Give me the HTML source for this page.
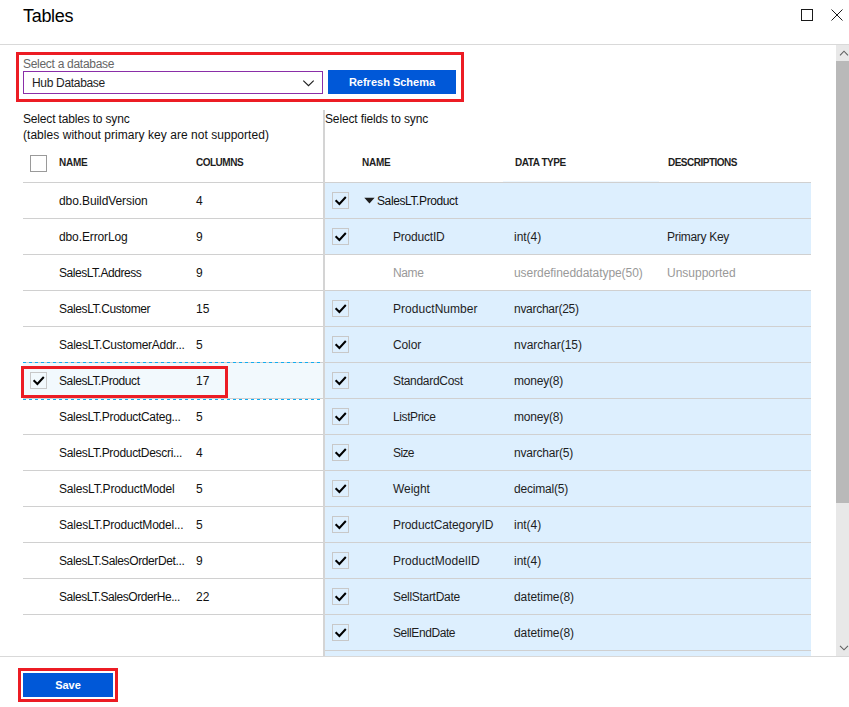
<!DOCTYPE html>
<html><head><meta charset="utf-8"><title>Tables</title>
<style>
html,body{margin:0;padding:0;}
body{width:849px;height:707px;overflow:hidden;background:#fff;font-family:"Liberation Sans",sans-serif;color:#111;position:relative}
.a{position:absolute;display:block}
.t{position:absolute;font-size:12px;line-height:16px;white-space:nowrap}
.h{position:absolute;font-size:10px;font-weight:bold;line-height:12px;white-space:nowrap;color:#1e1e1e}
.sep{position:absolute;height:1px;background:#d0d0d0}
.red{position:absolute;border:3px solid #ec1c24;box-sizing:border-box}
.btn{position:absolute;background:#0058d8;color:#fff;font-weight:bold;font-size:11px;line-height:24px;text-align:center;white-space:nowrap}
</style></head><body>

<div class="a" style="left:23px;top:4px;font-size:18px;line-height:24px;color:#000;white-space:nowrap;letter-spacing:-0.3px">Tables</div>
<svg class="a" style="left:795px;top:3px" width="54" height="24" viewBox="795 3 54 24"><rect x="801.5" y="9.5" width="11" height="11" fill="none" stroke="#1a1a1a" stroke-width="1"/><path d="M831.5 9.5 L842.5 20.5 M842.5 9.5 L831.5 20.5" stroke="#1a1a1a" stroke-width="1" fill="none"/></svg>
<div class="sep" style="left:0;top:44px;width:849px;background:#d9d9d9"></div>
<div class="a" style="left:836px;top:45px;width:13px;height:611px;background:#e8e8e8"></div>
<div class="a" style="left:836px;top:61px;width:13px;height:442px;background:#b9b9b9"></div>
<svg class="a" style="left:836px;top:45px" width="13" height="16" viewBox="836 45 13 16"><path d="M840 55.3 L844 51.2 L848 55.3" fill="none" stroke="#606060" stroke-width="1.1"/></svg>
<svg class="a" style="left:836px;top:640px" width="13" height="16" viewBox="836 640 13 16"><path d="M840 645.8 L844 649.8 L848 645.8" fill="none" stroke="#606060" stroke-width="1.1"/></svg>
<div class="red" style="left:16px;top:52px;width:448px;height:50px"></div>
<div class="t" style="left:23px;top:56px;color:#666;letter-spacing:-0.29px;">Select a database</div>
<div class="a" style="left:23px;top:71px;width:300px;height:23px;border:1px solid #8a2ea8;box-sizing:border-box"></div>
<div class="t" style="left:32px;top:75px;color:#1e1e1e;letter-spacing:-0.32px;">Hub Database</div>
<svg class="a" style="left:300px;top:76px" width="18" height="14" viewBox="300 76 18 14"><path d="M303.3 80.6 L308.5 85.6 L313.7 80.6" fill="none" stroke="#1e1e1e" stroke-width="1.15"/></svg>
<div class="btn" style="left:328px;top:70px;width:128px;height:24px">Refresh Schema</div>
<div class="t" style="left:23px;top:111px;letter-spacing:-0.17px;">Select tables to sync</div>
<div class="t" style="left:23px;top:127px;letter-spacing:0.04px;">(tables without primary key are not supported)</div>
<div class="t" style="left:325px;top:111px;letter-spacing:-0.14px;">Select fields to sync</div>
<div class="a" style="left:323px;top:110px;width:2px;height:546px;background:#d4d4d4"></div>
<div class="a" style="left:503px;top:181px;width:156px;height:1px;background:#eef7fe"></div>
<svg class="a" style="left:30px;top:155px" width="17" height="17" viewBox="0 0 17 17"><rect x="0.5" y="0.5" width="16" height="16" fill="none" stroke="#9a9a9a"/></svg>
<div class="h" style="left:59px;top:157px;letter-spacing:-0.25px;">NAME</div>
<div class="h" style="left:196px;top:157px;letter-spacing:-0.50px;">COLUMNS</div>
<div class="sep" style="left:23px;top:182px;width:300px"></div>
<div class="sep" style="left:23px;top:218px;width:300px"></div>
<div class="sep" style="left:23px;top:254px;width:300px"></div>
<div class="sep" style="left:23px;top:290px;width:300px"></div>
<div class="sep" style="left:23px;top:326px;width:300px"></div>
<div class="sep" style="left:23px;top:362px;width:300px"></div>
<div class="sep" style="left:23px;top:398px;width:300px"></div>
<div class="sep" style="left:23px;top:434px;width:300px"></div>
<div class="sep" style="left:23px;top:470px;width:300px"></div>
<div class="sep" style="left:23px;top:506px;width:300px"></div>
<div class="sep" style="left:23px;top:542px;width:300px"></div>
<div class="sep" style="left:23px;top:578px;width:300px"></div>
<div class="sep" style="left:23px;top:614px;width:300px"></div>
<div class="t" style="left:59px;top:193px;letter-spacing:-0.09px;">dbo.BuildVersion</div>
<div class="t" style="left:196px;top:193px">4</div>
<div class="t" style="left:59px;top:229px;letter-spacing:-0.12px;">dbo.ErrorLog</div>
<div class="t" style="left:196px;top:229px">9</div>
<div class="t" style="left:59px;top:265px;letter-spacing:-0.46px;">SalesLT.Address</div>
<div class="t" style="left:196px;top:265px">9</div>
<div class="t" style="left:59px;top:301px;letter-spacing:-0.37px;">SalesLT.Customer</div>
<div class="t" style="left:196px;top:301px">15</div>
<div class="t" style="left:59px;top:337px;letter-spacing:-0.27px;">SalesLT.CustomerAddr...</div>
<div class="t" style="left:196px;top:337px">5</div>
<div class="a" style="left:23px;top:363px;width:300px;height:35px;background:#f2f9fd"></div>
<svg class="a" style="left:30px;top:372px" width="17" height="17" viewBox="0 0 17 17"><rect x="0.5" y="0.5" width="16" height="16" fill="none" stroke="#c8c8c8"/><path d="M3.6 8.3 L7.4 12 L13.8 5" fill="none" stroke="#000" stroke-width="2"/></svg>
<div class="t" style="left:59px;top:373px;letter-spacing:-0.39px;">SalesLT.Product</div>
<div class="t" style="left:196px;top:373px">17</div>
<div class="t" style="left:59px;top:409px;letter-spacing:-0.30px;">SalesLT.ProductCateg...</div>
<div class="t" style="left:196px;top:409px">5</div>
<div class="t" style="left:59px;top:445px;letter-spacing:-0.31px;">SalesLT.ProductDescri...</div>
<div class="t" style="left:196px;top:445px">4</div>
<div class="t" style="left:59px;top:481px;letter-spacing:-0.19px;">SalesLT.ProductModel</div>
<div class="t" style="left:196px;top:481px">5</div>
<div class="t" style="left:59px;top:517px;letter-spacing:-0.21px;">SalesLT.ProductModel...</div>
<div class="t" style="left:196px;top:517px">5</div>
<div class="t" style="left:59px;top:553px;letter-spacing:-0.38px;">SalesLT.SalesOrderDet...</div>
<div class="t" style="left:196px;top:553px">9</div>
<div class="t" style="left:59px;top:589px;letter-spacing:-0.45px;">SalesLT.SalesOrderHe...</div>
<div class="t" style="left:196px;top:589px">22</div>
<div class="h" style="left:362px;top:157px;letter-spacing:-0.25px;">NAME</div>
<div class="h" style="left:515px;top:157px;letter-spacing:-0.46px;">DATA TYPE</div>
<div class="h" style="left:668px;top:157px;letter-spacing:-0.51px;">DESCRIPTIONS</div>
<div class="a" style="left:325px;top:182px;width:486px;height:474px;overflow:hidden">
<div class="a" style="left:0;top:0px;width:486px;height:36px;background:#ddeffe"></div>
<div class="sep" style="left:0;top:0px;width:486px"></div>
<svg class="a" style="left:7px;top:10px" width="17" height="17" viewBox="0 0 17 17"><rect x="0.5" y="0.5" width="16" height="16" fill="none" stroke="#c8c8c8"/><path d="M3.6 8.3 L7.4 12 L13.8 5" fill="none" stroke="#000" stroke-width="2"/></svg>
<svg class="a" style="left:38px;top:14px" width="12" height="8" viewBox="0 0 12 8"><path d="M1.3 1.8 H11.6 L6.45 7.5 Z" fill="#1e1e1e"/></svg>
<div class="t" style="left:52px;top:11px;letter-spacing:-0.39px;">SalesLT.Product</div>
<div class="a" style="left:0;top:36px;width:486px;height:36px;background:#ddeffe"></div>
<div class="sep" style="left:0;top:36px;width:486px"></div>
<svg class="a" style="left:7px;top:46px" width="17" height="17" viewBox="0 0 17 17"><rect x="0.5" y="0.5" width="16" height="16" fill="none" stroke="#c8c8c8"/><path d="M3.6 8.3 L7.4 12 L13.8 5" fill="none" stroke="#000" stroke-width="2"/></svg>
<div class="t" style="left:68px;top:47px;color:#1e1e1e;letter-spacing:-0.21px;">ProductID</div>
<div class="t" style="left:189px;top:47px;color:#1e1e1e;letter-spacing:-0.02px;">int(4)</div>
<div class="t" style="left:342px;top:47px;color:#1e1e1e;letter-spacing:-0.31px;">Primary Key</div>
<div class="a" style="left:0;top:72px;width:486px;height:36px;background:#fff"></div>
<div class="sep" style="left:0;top:72px;width:486px"></div>
<div class="t" style="left:68px;top:83px;color:#999;letter-spacing:-0.40px;">Name</div>
<div class="t" style="left:189px;top:83px;color:#999;letter-spacing:-0.06px;">userdefineddatatype(50)</div>
<div class="t" style="left:342px;top:83px;color:#999;letter-spacing:0.00px;">Unsupported</div>
<div class="a" style="left:0;top:108px;width:486px;height:36px;background:#ddeffe"></div>
<div class="sep" style="left:0;top:108px;width:486px"></div>
<svg class="a" style="left:7px;top:118px" width="17" height="17" viewBox="0 0 17 17"><rect x="0.5" y="0.5" width="16" height="16" fill="none" stroke="#c8c8c8"/><path d="M3.6 8.3 L7.4 12 L13.8 5" fill="none" stroke="#000" stroke-width="2"/></svg>
<div class="t" style="left:68px;top:119px;color:#1e1e1e;letter-spacing:0.04px;">ProductNumber</div>
<div class="t" style="left:189px;top:119px;color:#1e1e1e;letter-spacing:-0.28px;">nvarchar(25)</div>
<div class="a" style="left:0;top:144px;width:486px;height:36px;background:#ddeffe"></div>
<div class="sep" style="left:0;top:144px;width:486px"></div>
<svg class="a" style="left:7px;top:154px" width="17" height="17" viewBox="0 0 17 17"><rect x="0.5" y="0.5" width="16" height="16" fill="none" stroke="#c8c8c8"/><path d="M3.6 8.3 L7.4 12 L13.8 5" fill="none" stroke="#000" stroke-width="2"/></svg>
<div class="t" style="left:68px;top:155px;color:#1e1e1e;letter-spacing:-0.12px;">Color</div>
<div class="t" style="left:189px;top:155px;color:#1e1e1e;">nvarchar(15)</div>
<div class="a" style="left:0;top:180px;width:486px;height:36px;background:#ddeffe"></div>
<div class="sep" style="left:0;top:180px;width:486px"></div>
<svg class="a" style="left:7px;top:190px" width="17" height="17" viewBox="0 0 17 17"><rect x="0.5" y="0.5" width="16" height="16" fill="none" stroke="#c8c8c8"/><path d="M3.6 8.3 L7.4 12 L13.8 5" fill="none" stroke="#000" stroke-width="2"/></svg>
<div class="t" style="left:68px;top:191px;color:#1e1e1e;letter-spacing:-0.30px;">StandardCost</div>
<div class="t" style="left:189px;top:191px;color:#1e1e1e;letter-spacing:-0.20px;">money(8)</div>
<div class="a" style="left:0;top:216px;width:486px;height:36px;background:#ddeffe"></div>
<div class="sep" style="left:0;top:216px;width:486px"></div>
<svg class="a" style="left:7px;top:226px" width="17" height="17" viewBox="0 0 17 17"><rect x="0.5" y="0.5" width="16" height="16" fill="none" stroke="#c8c8c8"/><path d="M3.6 8.3 L7.4 12 L13.8 5" fill="none" stroke="#000" stroke-width="2"/></svg>
<div class="t" style="left:68px;top:227px;color:#1e1e1e;letter-spacing:-0.39px;">ListPrice</div>
<div class="t" style="left:189px;top:227px;color:#1e1e1e;letter-spacing:-0.20px;">money(8)</div>
<div class="a" style="left:0;top:252px;width:486px;height:36px;background:#ddeffe"></div>
<div class="sep" style="left:0;top:252px;width:486px"></div>
<svg class="a" style="left:7px;top:262px" width="17" height="17" viewBox="0 0 17 17"><rect x="0.5" y="0.5" width="16" height="16" fill="none" stroke="#c8c8c8"/><path d="M3.6 8.3 L7.4 12 L13.8 5" fill="none" stroke="#000" stroke-width="2"/></svg>
<div class="t" style="left:68px;top:263px;color:#1e1e1e;letter-spacing:-0.60px;">Size</div>
<div class="t" style="left:189px;top:263px;color:#1e1e1e;letter-spacing:-0.22px;">nvarchar(5)</div>
<div class="a" style="left:0;top:288px;width:486px;height:36px;background:#ddeffe"></div>
<div class="sep" style="left:0;top:288px;width:486px"></div>
<svg class="a" style="left:7px;top:298px" width="17" height="17" viewBox="0 0 17 17"><rect x="0.5" y="0.5" width="16" height="16" fill="none" stroke="#c8c8c8"/><path d="M3.6 8.3 L7.4 12 L13.8 5" fill="none" stroke="#000" stroke-width="2"/></svg>
<div class="t" style="left:68px;top:299px;color:#1e1e1e;letter-spacing:-0.06px;">Weight</div>
<div class="t" style="left:189px;top:299px;color:#1e1e1e;letter-spacing:-0.20px;">decimal(5)</div>
<div class="a" style="left:0;top:324px;width:486px;height:36px;background:#ddeffe"></div>
<div class="sep" style="left:0;top:324px;width:486px"></div>
<svg class="a" style="left:7px;top:334px" width="17" height="17" viewBox="0 0 17 17"><rect x="0.5" y="0.5" width="16" height="16" fill="none" stroke="#c8c8c8"/><path d="M3.6 8.3 L7.4 12 L13.8 5" fill="none" stroke="#000" stroke-width="2"/></svg>
<div class="t" style="left:68px;top:335px;color:#1e1e1e;letter-spacing:-0.10px;">ProductCategoryID</div>
<div class="t" style="left:189px;top:335px;color:#1e1e1e;letter-spacing:-0.02px;">int(4)</div>
<div class="a" style="left:0;top:360px;width:486px;height:36px;background:#ddeffe"></div>
<div class="sep" style="left:0;top:360px;width:486px"></div>
<svg class="a" style="left:7px;top:370px" width="17" height="17" viewBox="0 0 17 17"><rect x="0.5" y="0.5" width="16" height="16" fill="none" stroke="#c8c8c8"/><path d="M3.6 8.3 L7.4 12 L13.8 5" fill="none" stroke="#000" stroke-width="2"/></svg>
<div class="t" style="left:68px;top:371px;color:#1e1e1e;letter-spacing:0.05px;">ProductModelID</div>
<div class="t" style="left:189px;top:371px;color:#1e1e1e;letter-spacing:-0.02px;">int(4)</div>
<div class="a" style="left:0;top:396px;width:486px;height:36px;background:#ddeffe"></div>
<div class="sep" style="left:0;top:396px;width:486px"></div>
<svg class="a" style="left:7px;top:406px" width="17" height="17" viewBox="0 0 17 17"><rect x="0.5" y="0.5" width="16" height="16" fill="none" stroke="#c8c8c8"/><path d="M3.6 8.3 L7.4 12 L13.8 5" fill="none" stroke="#000" stroke-width="2"/></svg>
<div class="t" style="left:68px;top:407px;color:#1e1e1e;letter-spacing:-0.30px;">SellStartDate</div>
<div class="t" style="left:189px;top:407px;color:#1e1e1e;letter-spacing:-0.07px;">datetime(8)</div>
<div class="a" style="left:0;top:432px;width:486px;height:36px;background:#ddeffe"></div>
<div class="sep" style="left:0;top:432px;width:486px"></div>
<svg class="a" style="left:7px;top:442px" width="17" height="17" viewBox="0 0 17 17"><rect x="0.5" y="0.5" width="16" height="16" fill="none" stroke="#c8c8c8"/><path d="M3.6 8.3 L7.4 12 L13.8 5" fill="none" stroke="#000" stroke-width="2"/></svg>
<div class="t" style="left:68px;top:443px;color:#1e1e1e;letter-spacing:-0.42px;">SellEndDate</div>
<div class="t" style="left:189px;top:443px;color:#1e1e1e;letter-spacing:-0.07px;">datetime(8)</div>
<div class="a" style="left:0;top:468px;width:486px;height:36px;background:#ddeffe"></div>
<div class="sep" style="left:0;top:468px;width:486px"></div>
<svg class="a" style="left:7px;top:478px" width="17" height="17" viewBox="0 0 17 17"><rect x="0.5" y="0.5" width="16" height="16" fill="none" stroke="#c8c8c8"/><path d="M3.6 8.3 L7.4 12 L13.8 5" fill="none" stroke="#000" stroke-width="2"/></svg>
</div>
<div class="a" style="left:23px;top:362px;width:300px;height:1px;background:repeating-linear-gradient(90deg,#12acf0 0 3px,transparent 3px 6px)"></div>
<div class="a" style="left:23px;top:399px;width:300px;height:1px;background:repeating-linear-gradient(90deg,#12acf0 0 3px,transparent 3px 6px)"></div>
<div class="red" style="left:21px;top:366px;width:207px;height:32px"></div>
<div class="sep" style="left:0;top:656px;width:849px;background:#d9d9d9"></div>
<div class="red" style="left:18px;top:668px;width:100px;height:34px"></div>
<div class="btn" style="left:23px;top:673px;width:90px;height:24px">Save</div>
</body></html>
